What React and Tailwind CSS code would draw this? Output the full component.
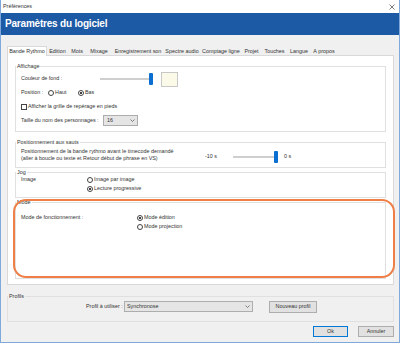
import React from "react";

function Radio({ checked }) {
  return (
    <span className="w-[6px] h-[6px] rounded-full border border-[#444] bg-white flex items-center justify-center shrink-0">
      {checked && <span className="w-[2px] h-[2px] rounded-full bg-black" />}
    </span>
  );
}

function Chevron() {
  return (
    <svg width="5" height="3" viewBox="0 0 5 3">
      <path d="M0.5 0.5 L2.5 2.5 L4.5 0.5" stroke="#666" strokeWidth="0.8" fill="none" />
    </svg>
  );
}

function Slider({ width }) {
  return (
    <div className="flex items-center h-[12px]" style={{ width }}>
      <div className="flex-1 h-[2px] bg-[#cfcfcf]" />
      <div className="w-[4px] h-[12px] bg-[#0a6fd1] rounded-[1px]" />
    </div>
  );
}

function Group({ label, className = "", children, bg = "bg-white" }) {
  return (
    <div className={`relative border border-[#e0e0e0] ${className}`}>
      <span className={`absolute left-0 top-[-4px] ${bg} px-[1px] leading-[7px]`}>{label}</span>
      {children}
    </div>
  );
}

const tabs = [
  ["Bande Rythmo", 40],
  ["Edition", 21],
  ["Mots", 18],
  ["Mixage", 26],
  ["Enregistrement son", 52],
  ["Spectre audio", 36],
  ["Comptage ligne", 42],
  ["Projet", 19],
  ["Touches", 27],
  ["Langue", 22],
  ["A propos", 28],
];

export default function App() {
  return (
    <div className="w-[400px] h-[343px] bg-[#f0f0f0] border-x border-b border-[#7fa9dc] flex flex-col text-[5.4px] leading-none text-[#333] font-['Liberation_Sans',Arial,sans-serif] overflow-hidden">
      {/* Title bar */}
      <div className="h-[13px] bg-white flex items-center justify-between pl-[2px] pr-[4px] shrink-0">
        <span>Préférences</span>
        <svg width="6" height="6" viewBox="0 0 6 6">
          <path d="M0.5 0.5 L5.5 5.5 M5.5 0.5 L0.5 5.5" stroke="#444" strokeWidth="0.7" />
        </svg>
      </div>
      {/* Header */}
      <div className="h-[22px] bg-[#1c5aa6] text-white text-[10px] font-bold tracking-[-0.2px] flex items-center pl-[4px] shrink-0">
        Paramètres du logiciel
      </div>
      {/* Body */}
      <div className="flex-1 flex flex-col pl-[6px] pr-[5px] pt-[11px]">
        {/* Tabs */}
        <div className="h-[9px] flex items-end relative z-10">
          {tabs.map(([t, w], i) =>
            i === 0 ? (
              <div
                key={t}
                className="h-[10px] mb-[-1px] bg-white border-x border-t border-[#d9d9d9] flex items-center justify-center"
                style={{ width: w }}
              >
                {t}
              </div>
            ) : (
              <div
                key={t}
                className="h-[7px] flex items-center justify-center"
                style={{ width: w }}
              >
                {t}
              </div>
            )
          )}
        </div>
        {/* Panel */}
        <div className="h-[230px] bg-white border border-[#d9d9d9] px-[7px] pt-[10px] flex flex-col shrink-0">
          <Group label="Affichage" className="h-[66px] pt-[5px] pl-[5px] flex flex-col">
            <div className="h-[14px] flex items-center">
              <span className="w-[79px]">Couleur de fond :</span>
              <Slider width={53} />
              <div className="ml-[8px] w-[17px] h-[15px] border border-[#c8c8c8] bg-[#fbf9e8]" />
            </div>
            <div className="h-[14px] flex items-center">
              <span className="w-[27px]">Position :</span>
              <div className="w-[30px] flex items-center gap-[1px]">
                <Radio />
                <span>Haut</span>
              </div>
              <div className="flex items-center gap-[1px]">
                <Radio checked />
                <span>Bas</span>
              </div>
            </div>
            <div className="h-[13px] flex items-center gap-[1px]">
              <span className="w-[6px] h-[6px] border border-[#444] bg-white shrink-0" />
              <span>Afficher la grille de repérage en pieds</span>
            </div>
            <div className="h-[15px] flex items-center">
              <span className="w-[82px]">Taille du nom des personnages :</span>
              <div className="w-[35px] h-[11px] bg-[#e5e5e5] border border-[#adadad] flex items-center justify-between pl-[3px] pr-[2px]">
                <span>16</span>
                <Chevron />
              </div>
            </div>
          </Group>

          <Group label="Positionnement aux sauts" className="mt-[10px] h-[26px] pl-[5px] flex items-center">
            <div className="w-[184px] leading-[7px]">
              <div>Positionnement de la bande rythmo avant le timecode demandé</div>
              <div>(aller à boucle ou texte et Retour début de phrase en VS)</div>
            </div>
            <div className="flex items-center mt-[3px]">
              <span className="w-[28px]">-10 s</span>
              <Slider width={45} />
              <span className="ml-[6px]">0 s</span>
            </div>
          </Group>

          <Group label="Jog" className="mt-[4px] h-[26px] pl-[5px] pt-[2px] flex">
            <div className="w-[66px] h-[9px] flex items-center">Image</div>
            <div className="flex flex-col">
              <div className="h-[9px] flex items-center gap-[1px]">
                <Radio />
                <span>Image par image</span>
              </div>
              <div className="h-[9px] flex items-center gap-[1px]">
                <Radio checked />
                <span>Lecture progressive</span>
              </div>
            </div>
          </Group>

          <Group label="Mode" className="mt-[4px] h-[77px] pl-[5px] pt-[10px] flex">
            <div className="w-[116px] h-[9px] flex items-center">Mode de fonctionnement :</div>
            <div className="flex flex-col">
              <div className="h-[9px] flex items-center gap-[1px]">
                <Radio checked />
                <span>Mode édition</span>
              </div>
              <div className="h-[10px] flex items-center gap-[1px]">
                <Radio />
                <span>Mode projection</span>
              </div>
            </div>
            <div className="absolute left-[-3px] top-[-4px] right-[-10px] bottom-0 border-2 border-[#ef7f47] rounded-[13px] pointer-events-none z-20" />
          </Group>
        </div>

        {/* Profils */}
        <Group label="Profils" bg="bg-[#f0f0f0]" className="mt-[11px] h-[26px] pt-[4px] pl-[78px] flex items-start shrink-0">
          <div className="h-[11px] flex items-center">
            <span className="w-[38px]">Profil à utiliser :</span>
            <div className="w-[129px] h-[11px] bg-[#e5e5e5] border border-[#adadad] flex items-center justify-between pl-[2px] pr-[2px]">
              <span>Synchronose</span>
              <Chevron />
            </div>
            <div className="ml-[16px] w-[48px] h-[12px] bg-[#e1e1e1] border border-[#adadad] flex items-center justify-center">
              Nouveau profil
            </div>
          </div>
        </Group>

        {/* Buttons */}
        <div className="mt-[4px] h-[11px] flex justify-end gap-[10px] shrink-0">
          <div className="w-[35px] h-[11px] bg-[#e1e1e1] border border-[#0078d7] flex items-center justify-center">Ok</div>
          <div className="w-[36px] h-[11px] bg-[#e1e1e1] border border-[#adadad] flex items-center justify-center">Annuler</div>
        </div>
      </div>
    </div>
  );
}
